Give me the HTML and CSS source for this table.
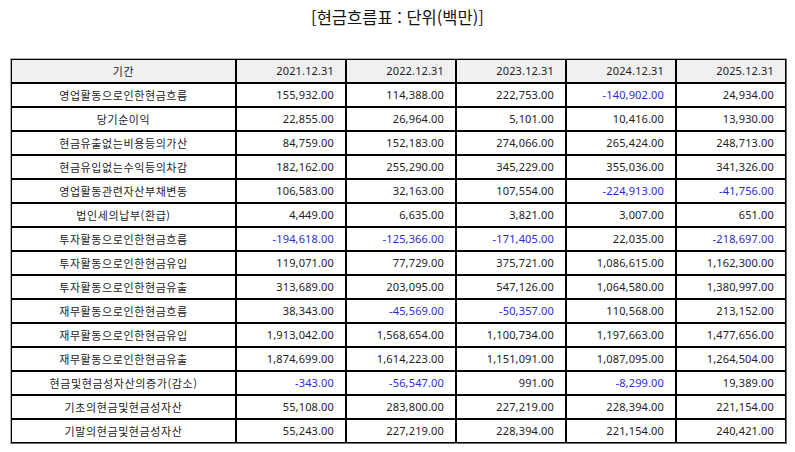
FILE: index.html
```html
<!DOCTYPE html>
<html lang="ko">
<head>
<meta charset="utf-8">
<title>현금흐름표</title>
<link rel="stylesheet" href="styles.css">
</head>
<body>
<h1 class="title">[현금흐름표 : 단위(백만)]</h1>
<div class="wrap">
<table class="cf">
<thead>
<tr><th class="label">기간</th><th>2021.12.31</th><th>2022.12.31</th><th>2023.12.31</th><th>2024.12.31</th><th>2025.12.31</th></tr>
</thead>
<tbody>
<tr><td class="label">영업활동으로인한현금흐름</td><td>155,932.00</td><td>114,388.00</td><td>222,753.00</td><td class="neg">-140,902.00</td><td>24,934.00</td></tr>
<tr><td class="label">당기순이익</td><td>22,855.00</td><td>26,964.00</td><td>5,101.00</td><td>10,416.00</td><td>13,930.00</td></tr>
<tr><td class="label">현금유출없는비용등의가산</td><td>84,759.00</td><td>152,183.00</td><td>274,066.00</td><td>265,424.00</td><td>248,713.00</td></tr>
<tr><td class="label">현금유입없는수익등의차감</td><td>182,162.00</td><td>255,290.00</td><td>345,229.00</td><td>355,036.00</td><td>341,326.00</td></tr>
<tr><td class="label">영업활동관련자산부채변동</td><td>106,583.00</td><td>32,163.00</td><td>107,554.00</td><td class="neg">-224,913.00</td><td class="neg">-41,756.00</td></tr>
<tr><td class="label">법인세의납부(환급)</td><td>4,449.00</td><td>6,635.00</td><td>3,821.00</td><td>3,007.00</td><td>651.00</td></tr>
<tr><td class="label">투자활동으로인한현금흐름</td><td class="neg">-194,618.00</td><td class="neg">-125,366.00</td><td class="neg">-171,405.00</td><td>22,035.00</td><td class="neg">-218,697.00</td></tr>
<tr><td class="label">투자활동으로인한현금유입</td><td>119,071.00</td><td>77,729.00</td><td>375,721.00</td><td>1,086,615.00</td><td>1,162,300.00</td></tr>
<tr><td class="label">투자활동으로인한현금유출</td><td>313,689.00</td><td>203,095.00</td><td>547,126.00</td><td>1,064,580.00</td><td>1,380,997.00</td></tr>
<tr><td class="label">재무활동으로인한현금흐름</td><td>38,343.00</td><td class="neg">-45,569.00</td><td class="neg">-50,357.00</td><td>110,568.00</td><td>213,152.00</td></tr>
<tr><td class="label">재무활동으로인한현금유입</td><td>1,913,042.00</td><td>1,568,654.00</td><td>1,100,734.00</td><td>1,197,663.00</td><td>1,477,656.00</td></tr>
<tr><td class="label">재무활동으로인한현금유출</td><td>1,874,699.00</td><td>1,614,223.00</td><td>1,151,091.00</td><td>1,087,095.00</td><td>1,264,504.00</td></tr>
<tr><td class="label">현금및현금성자산의증가(감소)</td><td class="neg">-343.00</td><td class="neg">-56,547.00</td><td>991.00</td><td class="neg">-8,299.00</td><td>19,389.00</td></tr>
<tr><td class="label">기초의현금및현금성자산</td><td>55,108.00</td><td>283,800.00</td><td>227,219.00</td><td>228,394.00</td><td>221,154.00</td></tr>
<tr><td class="label">기말의현금및현금성자산</td><td>55,243.00</td><td>227,219.00</td><td>228,394.00</td><td>221,154.00</td><td>240,421.00</td></tr>
</tbody>
</table>
</div>
</body>
</html>
```

FILE: styles.css
```css
html, body {
  margin: 0;
  padding: 0;
  background: #ffffff;
}
body {
  font-family: "Noto Sans", "Noto Sans CJK KR", sans-serif;
  color: #222222;
}
.title {
  margin: 0 0 31px;
  padding-top: 7px;
  font-family: "Noto Sans CJK KR", sans-serif;
  font-weight: 400;
  font-size: 16.5px;
  line-height: 20px;
  text-align: center;
  color: #111111;
}
.wrap {
  padding-left: 10px;
}
.cf {
  border-collapse: separate;
  border-spacing: 0;
  border: 1px solid;
  border-color: #b0b0b0 #6a6a6a #6a6a6a #b0b0b0;
  table-layout: fixed;
  width: 777px;
}
.cf th,
.cf td {
  box-sizing: border-box;
  width: 110px;
  height: 24px;
  padding: 0 11px 0 4px;
  border: 1px solid #000000;
  font-size: 11px;
  font-weight: 400;
  line-height: 14px;
  text-align: right;
  vertical-align: middle;
  white-space: nowrap;
  letter-spacing: 0.15px;
}
.cf th {
  background: #f0f0f0;
}
.cf .label {
  width: 225px;
  padding: 0 4px;
  text-align: center;
  font-family: "Noto Sans CJK KR", sans-serif;
  letter-spacing: 0.6px;
}
.cf .neg {
  color: #2b2bd6;
}
```
